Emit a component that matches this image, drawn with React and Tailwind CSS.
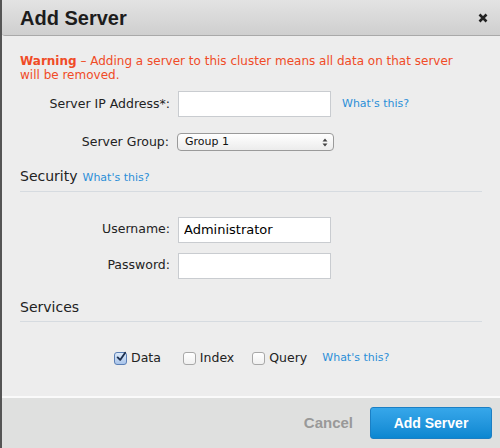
import React from "react";

function Field({ label, value, link, className = "" }) {
  return (
    <div className={`flex items-center ${className}`}>
      <label className="w-[158px] pr-[8px] text-right text-[12.5px] text-[#222]">{label}</label>
      <input
        readOnly
        value={value || ""}
        className="w-[153px] h-[26px] bg-white border border-[#c9ccd0] px-[5px] text-[13px] text-black outline-none"
      />
      {link && <a className="ml-[11px] text-[11px] text-[#2b8fd8]">What's this?</a>}
    </div>
  );
}

function Check({ label, checked }) {
  return (
    <label className="flex items-center gap-[4px] text-[12.5px] text-[#222]">
      <span
        className={`w-[13px] h-[13px] rounded-[3px] border flex items-center justify-center ${
          checked ? "border-[#5b7fb5] bg-gradient-to-b from-[#dce9f8] to-[#a9c4ea]" : "border-[#a8a8a8] bg-gradient-to-b from-white to-[#f0f0f0]"
        }`}
      >
        {checked && (
          <svg width="12" height="12" viewBox="0 0 12 12" className="-mt-[2px] ml-[1px]">
            <path d="M2 6.5 L5 9.5 L11 1" fill="none" stroke="#1d2f4e" strokeWidth="2.2" strokeLinecap="round" strokeLinejoin="round" />
          </svg>
        )}
      </span>
      {label}
    </label>
  );
}

export default function App() {
  return (
    <div className="w-[500px] h-[448px] bg-[#ededed] border-l-2 border-[#555] flex flex-col overflow-hidden" style={{ fontFamily: '"DejaVu Sans", Verdana, sans-serif' }}>
      {/* header */}
      <div className="h-[36px] shrink-0 flex items-center justify-between pl-[18px] pr-[12px] bg-gradient-to-b from-[#e3e3e3] to-[#cfcfcf] border-b border-[#a9a9a9] rounded-bl-[3px]">
        <h2 className="text-[20px] font-bold text-[#1c1c1c] font-['Liberation_Sans',Arial,sans-serif]">Add Server</h2>
        <svg width="10" height="10" viewBox="0 0 10 10">
          <path d="M1.5 1.5 L8.5 8.5 M8.5 1.5 L1.5 8.5" stroke="#222" strokeWidth="2.6" />
        </svg>
      </div>

      {/* body */}
      <div className="flex-1 px-[18px]">
        <p className="mt-[18px] max-w-[444px] text-[12px] leading-[14px] text-[#f04b27]">
          <span className="font-bold">Warning</span> – Adding a server to this cluster means all data on that server will be removed.
        </p>

        <Field label="Server IP Address*:" link className="mt-[9px]" />

        <div className="flex items-center mt-[16px]">
          <label className="w-[157px] pr-[8px] text-right text-[12.5px] text-[#222]">Server Group:</label>
          <div className="w-[157px] h-[18px] rounded-[4px] border border-[#9a9a9a] bg-gradient-to-b from-white to-[#ececec] flex items-center justify-between pl-[7px] pr-[5px] text-[11px] text-[#111]">
            <span>Group 1</span>
            <svg width="6" height="9" viewBox="0 0 6 9">
              <path d="M3 0.5 L5.5 3.5 L0.5 3.5 Z M3 8.5 L5.5 5.5 L0.5 5.5 Z" fill="#444" />
            </svg>
          </div>
        </div>

        <div className="mt-[15px] flex items-baseline gap-[5px] leading-[18px] pb-[4px] border-b border-[#d6dbe0]">
          <span className="text-[14px] text-[#222]">Security</span>
          <a className="text-[11px] text-[#2b8fd8]">What's this?</a>
        </div>

        <Field label="Username:" value="Administrator" className="mt-[25px]" />
        <Field label="Password:" className="mt-[10px]" />

        <div className="mt-[19px] leading-[18px] pb-[5px] border-b border-[#d6dbe0]">
          <span className="text-[14px] text-[#222]">Services</span>
        </div>

        <div className="mt-[27px] ml-[94px] flex items-center">
          <Check label="Data" checked />
          <div className="ml-[22px]"><Check label="Index" /></div>
          <div className="ml-[18px]"><Check label="Query" /></div>
          <a className="ml-[15px] text-[11px] text-[#2b8fd8]">What's this?</a>
        </div>
      </div>

      {/* footer */}
      <div className="h-[52px] shrink-0 border-t-2 border-[#fafafa] bg-[#dfe0df] flex items-center justify-end pr-[8px] font-['Liberation_Sans',Arial,sans-serif]">
        <button className="text-[15px] font-bold text-[#999] mr-[17px]">Cancel</button>
        <button className="w-[122px] h-[32px] rounded-[3px] border border-[#1b7fc4] bg-gradient-to-b from-[#36a7ea] to-[#0a87d1] text-white text-[14px] font-bold">
          Add Server
        </button>
      </div>
    </div>
  );
}
